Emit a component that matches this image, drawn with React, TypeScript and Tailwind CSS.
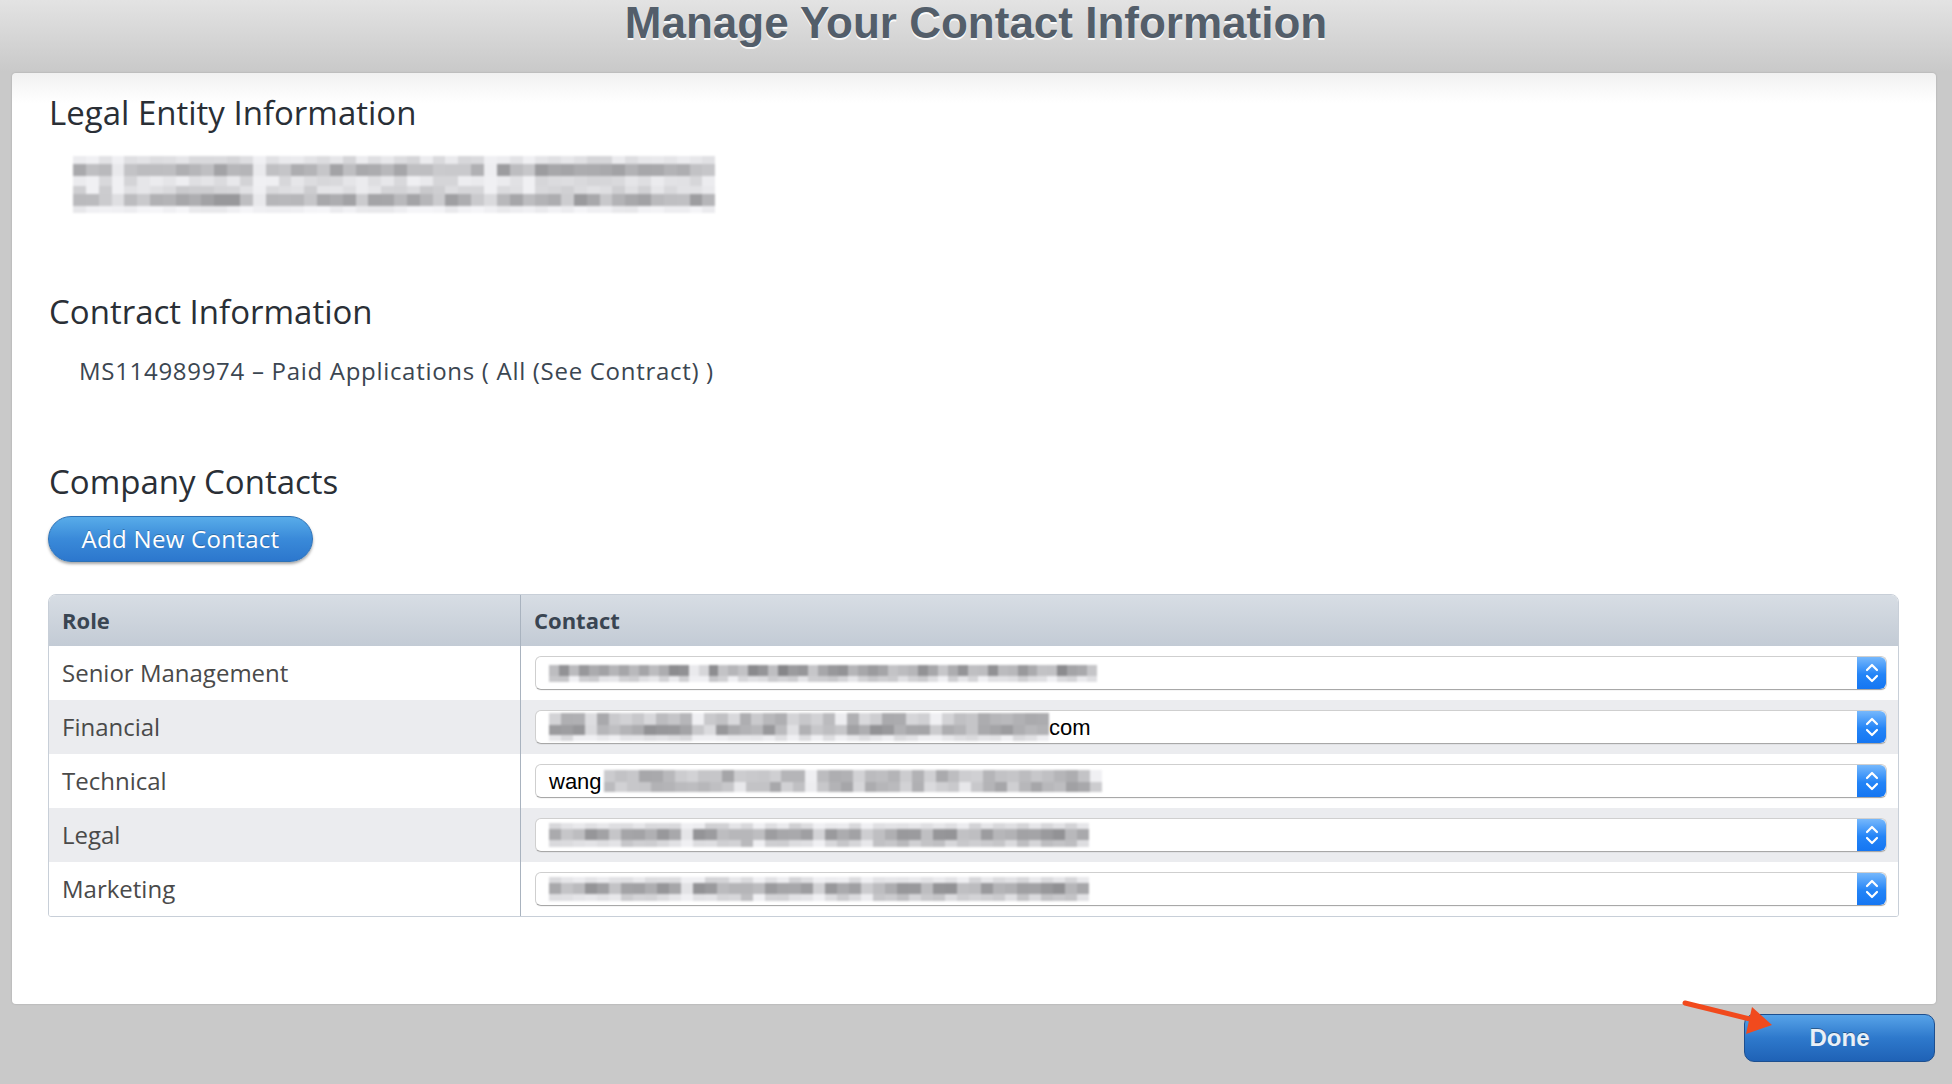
import React from "react";

const rnd = (seed: number, i: number) => {
  const x = Math.sin(seed * 97.13 + i * 12.9898) * 43758.5453;
  return x - Math.floor(x);
};

type MRow = { h: number; base: number; spread: number };

function Mosaic({ width, rows, cell, seed, gapEvery = 0 }: { width: number; rows: MRow[]; cell: number; seed: number; gapEvery?: number }) {
  const n = Math.ceil(width / cell);
  return (
    <div className="flex flex-col blur-[0.8px]" style={{ width }}>
      {rows.map((r, ri) => (
        <div key={ri} className="flex" style={{ height: r.h }}>
          {Array.from({ length: n }).map((_, ci) => {
            const gap = gapEvery > 0 && rnd(seed + 7, ci) > 1 - 1 / gapEvery;
            let v = Math.round(r.base + (rnd(seed + ri * 3, ci) - 0.5) * r.spread);
            if (gap) v = Math.min(240, v + 35);
            v = Math.max(110, Math.min(248, v));
            return <div key={ci} style={{ width: cell, height: r.h, background: `rgb(${v},${v},${Math.min(255, v + 3)})` }} />;
          })}
        </div>
      ))}
    </div>
  );
}

function Stepper() {
  return (
    <div className="flex h-full w-[29px] items-center justify-center rounded-r-[6px] bg-[linear-gradient(to_bottom,#76b8fc,#2384f7_55%,#1576f2)]">
      <svg width="16" height="24" viewBox="0 0 16 24" fill="none" stroke="#ffffff" strokeWidth="2.2" strokeLinecap="round" strokeLinejoin="round">
        <path d="M3 9 L8 4 L13 9" />
        <path d="M3 15 L8 20 L13 15" />
      </svg>
    </div>
  );
}

function SelectBox({ children }: { children: React.ReactNode }) {
  return (
    <div className="flex h-[34px] w-full items-stretch rounded-[6px] border border-[#cfcfcf] border-b-[#a8a8a8] bg-white shadow-[0_1px_0_rgba(0,0,0,0.04)]">
      <div className="flex flex-1 items-center overflow-hidden pl-[13px] font-['Liberation_Sans',Arial,sans-serif] text-[22px] text-black">
        {children}
      </div>
      <Stepper />
    </div>
  );
}

const rows = [
  { role: "Senior Management", alt: false, content: <Mosaic width={548} rows={[{ h: 11, base: 165, spread: 70 }, { h: 6, base: 215, spread: 40 }]} cell={10} seed={3} gapEvery={9} /> },
  {
    role: "Financial",
    alt: true,
    content: (
      <div className="flex items-center">
        <Mosaic width={500} rows={[{ h: 12, base: 192, spread: 55 }, { h: 10, base: 172, spread: 55 }, { h: 6, base: 228, spread: 25 }]} cell={12} seed={11} gapEvery={9} />
        <span>com</span>
      </div>
    ),
  },
  {
    role: "Technical",
    alt: false,
    content: (
      <div className="flex items-center">
        <span className="mr-[2px]">wang</span>
        <Mosaic width={498} rows={[{ h: 12, base: 188, spread: 50 }, { h: 10, base: 185, spread: 50 }]} cell={12} seed={21} gapEvery={9} />
      </div>
    ),
  },
  { role: "Legal", alt: true, content: <Mosaic width={540} rows={[{ h: 6, base: 222, spread: 30 }, { h: 11, base: 172, spread: 55 }, { h: 7, base: 205, spread: 45 }]} cell={12} seed={31} gapEvery={9} /> },
  { role: "Marketing", alt: false, content: <Mosaic width={540} rows={[{ h: 6, base: 225, spread: 30 }, { h: 11, base: 170, spread: 55 }, { h: 7, base: 210, spread: 45 }]} cell={12} seed={31} gapEvery={9} /> },
];

export default function App() {
  return (
    <div className="relative flex h-[1084px] w-[1952px] flex-col overflow-hidden bg-[linear-gradient(to_bottom,#e3e3e3,#c9c9c9_72px,#c9c9c9)] font-['Open_Sans','Lato',sans-serif]">
      <h1 className="h-[44px] pt-[1px] text-center font-['Liberation_Sans',Arial,sans-serif] text-[44px] font-bold leading-[44px] text-[#535e6a] [text-shadow:0_2px_0_rgba(255,255,255,0.9)]">
        Manage Your Contact Information
      </h1>

      <div className="mx-[12px] mt-[29px] flex h-[931px] w-[1924px] flex-col rounded-[4px] bg-[linear-gradient(to_bottom,#f1f1f1,#ffffff_30px)] px-[36px] shadow-[0_0_2px_rgba(0,0,0,0.2)]">
        <h2 className="ml-[1px] mt-[24px] h-[32px] text-[33px] leading-[32px] text-[#2a2f36]">Legal Entity Information</h2>

        <div className="ml-[25px] mt-[27px]">
          <Mosaic
            width={642}
            rows={[
              { h: 8, base: 225, spread: 25 },
              { h: 12, base: 178, spread: 50 },
              { h: 10, base: 225, spread: 30 },
              { h: 8, base: 218, spread: 35 },
              { h: 12, base: 178, spread: 55 },
              { h: 7, base: 238, spread: 15 },
            ]}
            cell={13}
            seed={5}
            gapEvery={10}
          />
        </div>

        <h2 className="ml-[1px] mt-[83px] h-[32px] text-[33px] leading-[32px] text-[#2a2f36]">Contract Information</h2>
        <p className="ml-[31px] mt-[31px] h-[23px] text-[24px] leading-[23px] tracking-[0.7px] text-[#3b4651]">
          MS114989974 – Paid Applications ( All (See Contract) )
        </p>

        <h2 className="ml-[1px] mt-[84px] h-[32px] text-[33px] leading-[32px] text-[#2a2f36]">Company Contacts</h2>

        <div className="mt-[18px]">
          <button className="flex h-[46px] w-[265px] items-center justify-center rounded-full border border-[#2e72b6] bg-[linear-gradient(to_bottom,#58ace9,#3a8ad9_50%,#2c77cd)] text-[24px] tracking-[0.3px] text-white shadow-[0_2px_3px_rgba(0,0,0,0.35)] [text-shadow:0_-1px_0_rgba(0,0,0,0.25)]">
            Add New Contact
          </button>
        </div>

        <div className="mt-[32px] w-[1851px] overflow-hidden rounded-t-[8px] rounded-b-[3px] border border-[#c8cfd8]">
          <div className="flex h-[51px] bg-[linear-gradient(to_bottom,#d7dde4,#c3cbd5)] text-[22px] font-bold text-[#3a4552]">
            <div className="flex w-[472px] items-center border-r border-[#a9b3bf] pl-[13px]">Role</div>
            <div className="flex flex-1 items-center pl-[13px]">Contact</div>
          </div>
          {rows.map((r) => (
            <div key={r.role} className={`flex h-[54px] ${r.alt ? "bg-[#ebecef]" : "bg-white"}`}>
              <div className="flex w-[472px] items-center border-r border-[#a9b3bf] pl-[13px] text-[24px] text-[#4a4a4a]">{r.role}</div>
              <div className="flex flex-1 items-center pl-[14px] pr-[11px]">
                <SelectBox>{r.content}</SelectBox>
              </div>
            </div>
          ))}
        </div>
      </div>

      <div className="mr-[17px] mt-[10px] flex justify-end">
        <button className="flex h-[48px] w-[191px] items-center justify-center rounded-[10px] border border-[#1d4f8f] bg-[linear-gradient(to_bottom,#57a3e8,#2e79cc_50%,#1f62b6)] font-['Liberation_Sans',Arial,sans-serif] text-[24px] font-bold text-[#e9f0f7] [text-shadow:0_-1px_0_rgba(0,0,0,0.35)]">
          Done
        </button>
      </div>

      <svg className="absolute left-[1680px] top-[995px]" width="100" height="45" viewBox="0 0 100 45">
        <line x1="5" y1="8" x2="78" y2="26" stroke="#f14a1d" strokeWidth="5" strokeLinecap="round" />
        <polygon points="92,30 72,12 66,39" fill="#f14a1d" />
      </svg>
    </div>
  );
}
